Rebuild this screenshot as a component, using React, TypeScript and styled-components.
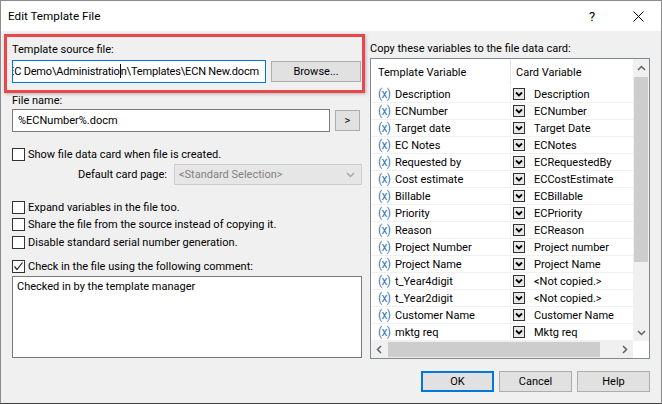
import React from "react";
import styled, { createGlobalStyle } from "styled-components";

const FONT = `Roboto, "Liberation Sans", sans-serif`;

const GlobalStyle = createGlobalStyle`
  html, body { margin: 0; padding: 0; background: #ffffff; }
  body { font-family: ${FONT}; font-size: 11px; color: #000; }
  * { box-sizing: border-box; }
`;

const Window = styled.div`
  width: 662px;
  height: 404px;
  display: flex;
  flex-direction: column;
  border: 1px solid #8c8c8c;
  border-bottom-color: #404040;
  background: #f0f0f0;
  overflow: hidden;
`;

const TitleBar = styled.div`
  height: 30px;
  flex: none;
  background: #ffffff;
  display: flex;
  align-items: center;
  padding-left: 7px;
`;

const Title = styled.div`
  flex: 1;
  font-size: 11.7px;
  line-height: 16px;
`;

const TitleButton = styled.div`
  width: 46px;
  height: 30px;
  display: flex;
  align-items: center;
  justify-content: center;
  font-size: 13px;
`;

const Body = styled.div`
  flex: 1;
  display: flex;
  flex-direction: column;
  padding: 10px 11px 0 11px;
`;

const Columns = styled.div`
  display: grid;
  grid-template-columns: 350px 280px;
  column-gap: 8px;
`;

const Column = styled.div`
  display: flex;
  flex-direction: column;
`;

const Label = styled.div<{ $top?: number }>`
  line-height: 15px;
  height: 15px;
  margin-top: ${(p) => p.$top ?? 0}px;
  white-space: nowrap;
`;

const Highlight = styled.div`
  position: relative;
  display: flex;
  flex-direction: column;
  padding-top: 1px;
`;

const HighlightFrame = styled.div`
  position: absolute;
  left: -8px;
  top: -7px;
  right: -3px;
  bottom: -10px;
  border: 3px solid #e8474b;
  box-shadow: 1px 1px 3px rgba(0, 0, 0, 0.25);
  pointer-events: none;
`;

const FieldRow = styled.div<{ $top?: number }>`
  display: flex;
  align-items: center;
  gap: 5px;
  margin-top: ${(p) => p.$top ?? 0}px;
`;

const TextBox = styled.div<{ $width: number; $focused?: boolean }>`
  width: ${(p) => p.$width}px;
  height: 23px;
  background: #fff;
  border: 1px solid ${(p) => (p.$focused ? "#0078d7" : "#7a7a7a")};
  overflow: hidden;
  white-space: nowrap;
  line-height: 21px;
  display: flex;
  justify-content: ${(p) => (p.$focused ? "flex-end" : "flex-start")};
  letter-spacing: ${(p) => (p.$focused ? "-0.18px" : "0")};
  padding: 0 6px 0 5px;
`;

const Caret = styled.span`
  display: inline-block;
  width: 1px;
  height: 14px;
  background: #000;
  vertical-align: -3px;
`;

const Button = styled.div<{ $width: number; $default?: boolean }>`
  width: ${(p) => p.$width}px;
  height: 21px;
  flex: none;
  background: #e1e1e1;
  border: ${(p) => (p.$default ? "2px solid #0078d7" : "1px solid #adadad")};
  display: flex;
  align-items: center;
  justify-content: center;
  line-height: 15px;
`;

const CheckRow = styled.div<{ $top?: number }>`
  display: flex;
  align-items: center;
  height: 15px;
  gap: 3px;
  margin-top: ${(p) => p.$top ?? 0}px;
  white-space: nowrap;
  line-height: 15px;
`;

const Box = styled.span`
  width: 13px;
  height: 13px;
  flex: none;
  border: 1px solid #333;
  background: #fff;
  display: flex;
  align-items: center;
  justify-content: center;
`;

const SelectRow = styled.div`
  display: flex;
  justify-content: flex-end;
  align-items: center;
  gap: 7px;
  margin-top: 2px;
`;

const Select = styled.div`
  width: 188px;
  height: 21px;
  background: #e6e6e6;
  border: 1px solid #cccccc;
  color: #838383;
  display: flex;
  align-items: center;
  justify-content: space-between;
  padding: 0 6px 0 4px;
  line-height: 15px;
`;

const TextArea = styled.div`
  margin-top: 2px;
  height: 82px;
  background: #fff;
  border: 1px solid #7a7a7a;
  padding: 2px 4px;
  line-height: 15px;
`;

const Table = styled.div`
  margin-top: 2px;
  height: 301px;
  border: 1px solid #828790;
  background: #fff;
  display: grid;
  grid-template-columns: 262px 16px;
  grid-template-rows: 282px 17px;
`;

const List = styled.div`
  display: flex;
  flex-direction: column;
  overflow: hidden;
`;

const ListRow = styled.div<{ $header?: boolean }>`
  display: grid;
  grid-template-columns: 140px 122px;
  height: ${(p) => (p.$header ? 27 : 17)}px;
  flex: none;
  border-bottom: 1px solid ${(p) => (p.$header ? "transparent" : "#f0f0f0")};
`;

const Cell = styled.div<{ $header?: boolean; $first?: boolean }>`
  display: flex;
  align-items: center;
  gap: 1px;
  padding-left: ${(p) => (p.$header ? (p.$first ? 7 : 5) : p.$first ? 7 : 2)}px;
  border-right: ${(p) =>
    p.$first ? `1px solid ${p.$header ? "#e5e5e5" : "#f0f0f0"}` : "none"};
  white-space: nowrap;
  overflow: hidden;
  line-height: 15px;
`;

const VarIcon = styled.span`
  color: #3b78b8;
  font-size: 12px;
  letter-spacing: -0.6px;
  width: 16px;
  flex: none;
`;

const CardText = styled.span`
  margin-left: 8px;
`;

const VScroll = styled.div`
  background: #f0f0f0;
  display: grid;
  grid-template-rows: 18px 185px 1fr 17px;
`;

const HScroll = styled.div`
  background: #f0f0f0;
  display: grid;
  grid-template-columns: 17px 212px 1fr 17px;
`;

const Thumb = styled.div<{ $horizontal?: boolean }>`
  background: #cdcdcd;
  margin: ${(p) => (p.$horizontal ? "1px 0" : "0 1px")};
`;

const Arrow = styled.div`
  display: flex;
  align-items: center;
  justify-content: center;
`;

const Corner = styled.div`
  background: #fff;
`;

const Footer = styled.div`
  display: flex;
  justify-content: flex-end;
  gap: 5px;
  margin-top: 12px;
`;

const Check = () => (
  <svg width="11" height="11" viewBox="0 0 11 11">
    <polyline points="1.5,5.5 4,8.5 9.5,1.5" fill="none" stroke="#222" strokeWidth="1.2" />
  </svg>
);

const Chevron = ({ dir, color = "#606060" }: { dir: "up" | "down" | "left" | "right"; color?: string }) => {
  const pts: Record<string, string> = {
    up: "1,6 4.5,2.5 8,6",
    down: "1,3 4.5,6.5 8,3",
    left: "6,1 2.5,4.5 6,8",
    right: "3,1 6.5,4.5 3,8",
  };
  return (
    <svg width="9" height="9" viewBox="0 0 9 9">
      <polyline points={pts[dir]} fill="none" stroke={color} strokeWidth="1.5" />
    </svg>
  );
};

const CardCheck = () => (
  <svg width="12" height="12" viewBox="0 0 12 12" style={{ flex: "none" }}>
    <rect x="0.5" y="0.5" width="11" height="11" fill="#e8e8e8" stroke="#333" />
    <polyline points="3,4.5 6,7.5 9,4.5" fill="none" stroke="#000" strokeWidth="1.8" />
  </svg>
);

const CloseIcon = () => (
  <svg width="11" height="11" viewBox="0 0 11 11">
    <path d="M0.5 0.5 L10.5 10.5 M10.5 0.5 L0.5 10.5" stroke="#000" strokeWidth="1" />
  </svg>
);

const rows: [string, string][] = [
  ["Description", "Description"],
  ["ECNumber", "ECNumber"],
  ["Target date", "Target Date"],
  ["EC Notes", "ECNotes"],
  ["Requested by", "ECRequestedBy"],
  ["Cost estimate", "ECCostEstimate"],
  ["Billable", "ECBillable"],
  ["Priority", "ECPriority"],
  ["Reason", "ECReason"],
  ["Project Number", "Project number"],
  ["Project Name", "Project Name"],
  ["t_Year4digit", "<Not copied.>"],
  ["t_Year2digit", "<Not copied.>"],
  ["Customer Name", "Customer Name"],
  ["mktg req", "Mktg req"],
];

export default function App() {
  return (
    <>
      <GlobalStyle />
      <Window>
        <TitleBar>
          <Title>Edit Template File</Title>
          <TitleButton>?</TitleButton>
          <TitleButton>
            <CloseIcon />
          </TitleButton>
        </TitleBar>
        <Body>
          <Columns>
            <Column>
              <Highlight>
                <Label>Template source file:</Label>
                <FieldRow $top={3}>
                  <TextBox $width={254} $focused>
                    <span>
                      EC Demo\Administratio<Caret />n\Templates\ECN New.docm
                    </span>
                  </TextBox>
                  <Button $width={90}>Browse...</Button>
                </FieldRow>
                <HighlightFrame />
              </Highlight>
              <Label $top={10}>File name:</Label>
              <FieldRow $top={1}>
                <TextBox $width={318}>%ECNumber%.docm</TextBox>
                <Button $width={25}>&gt;</Button>
              </FieldRow>
              <CheckRow $top={15}>
                <Box />
                Show file data card when file is created.
              </CheckRow>
              <SelectRow>
                <span>Default card page:</span>
                <Select>
                  <span>&lt;Standard Selection&gt;</span>
                  <Chevron dir="down" color="#a8a8a8" />
                </Select>
              </SelectRow>
              <CheckRow $top={15}>
                <Box />
                Expand variables in the file too.
              </CheckRow>
              <CheckRow $top={2}>
                <Box />
                Share the file from the source instead of copying it.
              </CheckRow>
              <CheckRow $top={3}>
                <Box />
                Disable standard serial number generation.
              </CheckRow>
              <CheckRow $top={9}>
                <Box>
                  <Check />
                </Box>
                Check in the file using the following comment:
              </CheckRow>
              <TextArea>Checked in by the template manager</TextArea>
            </Column>
            <Column>
              <Label>Copy these variables to the file data card:</Label>
              <Table>
                <List>
                  <ListRow $header>
                    <Cell $header $first>Template Variable</Cell>
                    <Cell $header>Card Variable</Cell>
                  </ListRow>
                  {rows.map(([t, c]) => (
                    <ListRow key={t}>
                      <Cell $first>
                        <VarIcon>(x)</VarIcon>
                        {t}
                      </Cell>
                      <Cell>
                        <CardCheck />
                        <CardText>{c}</CardText>
                      </Cell>
                    </ListRow>
                  ))}
                </List>
                <VScroll>
                  <Arrow>
                    <Chevron dir="up" />
                  </Arrow>
                  <Thumb />
                  <div />
                  <Arrow>
                    <Chevron dir="down" />
                  </Arrow>
                </VScroll>
                <HScroll>
                  <Arrow>
                    <Chevron dir="left" />
                  </Arrow>
                  <Thumb $horizontal />
                  <div />
                  <Arrow>
                    <Chevron dir="right" />
                  </Arrow>
                </HScroll>
                <Corner />
              </Table>
            </Column>
          </Columns>
          <Footer>
            <Button $width={73} $default>OK</Button>
            <Button $width={73}>Cancel</Button>
            <Button $width={73}>Help</Button>
          </Footer>
        </Body>
      </Window>
    </>
  );
}
